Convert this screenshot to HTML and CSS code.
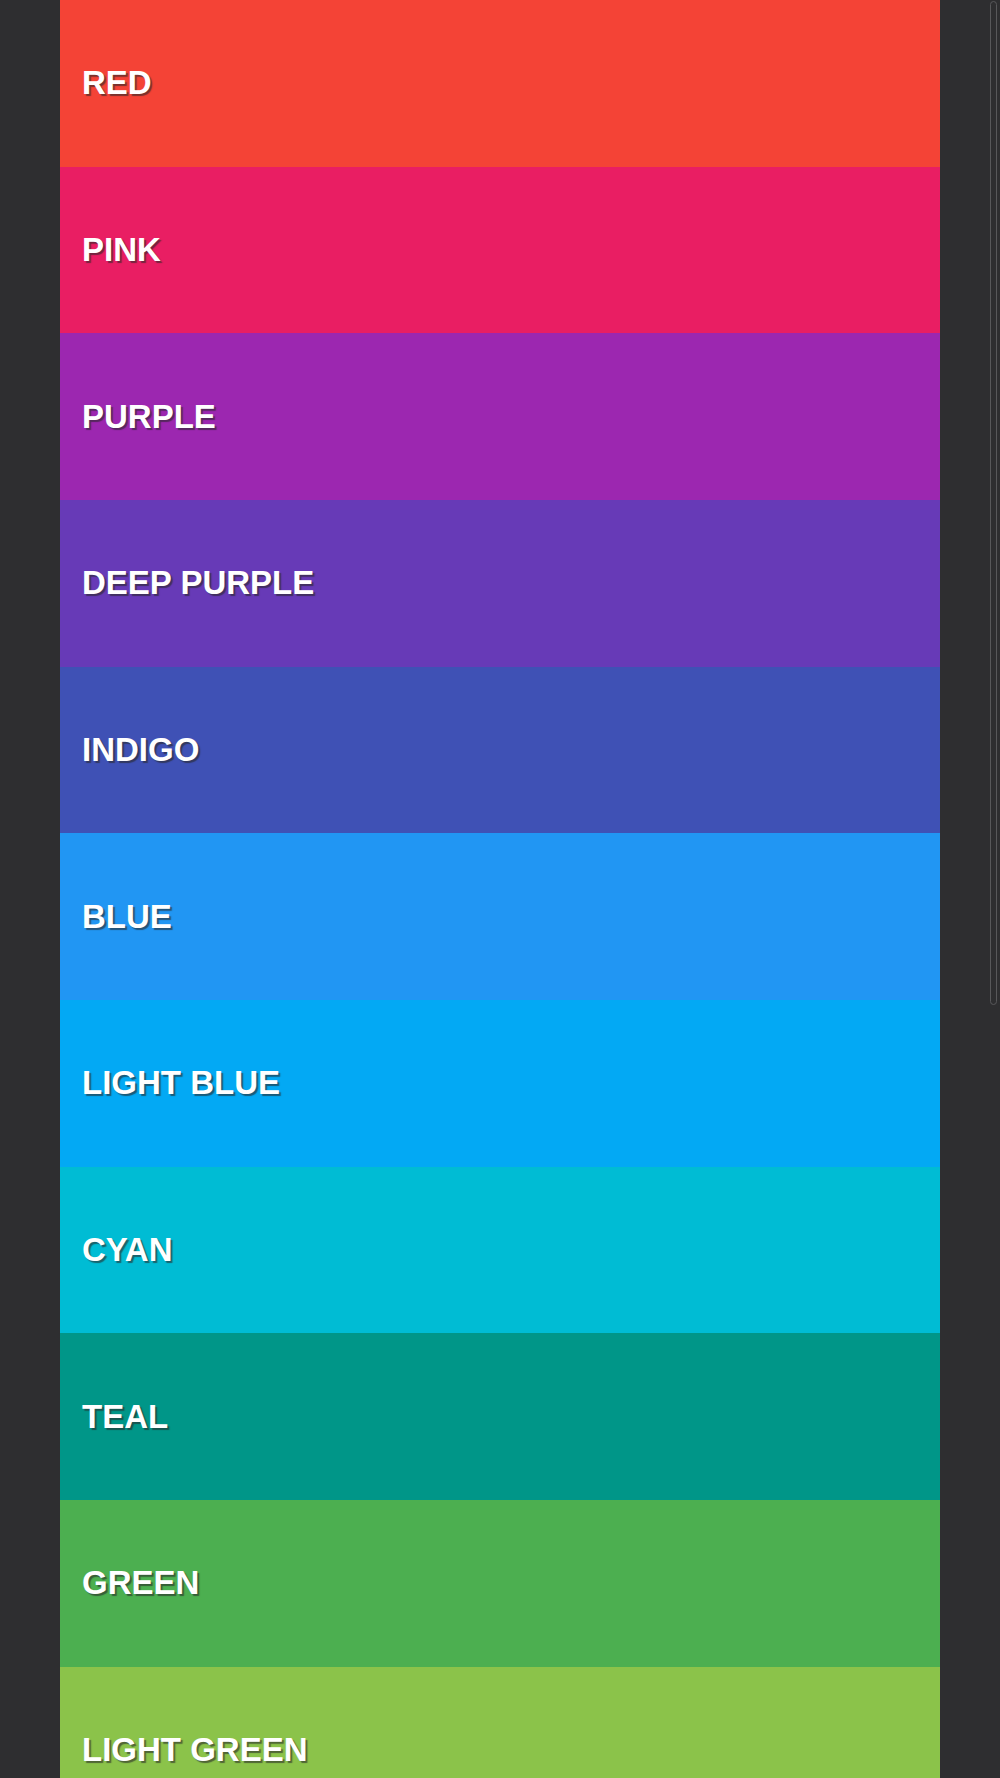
FILE: index.html
```html
<!DOCTYPE html>
<html lang="en">
<head>
<meta charset="utf-8">
<title>Colors</title>
<link rel="stylesheet" href="styles.css">
</head>
<body>
<ul class="colors">
  <li class="color red">Red</li>
  <li class="color pink">Pink</li>
  <li class="color purple">Purple</li>
  <li class="color deep-purple">Deep Purple</li>
  <li class="color indigo">Indigo</li>
  <li class="color blue">Blue</li>
  <li class="color light-blue">Light Blue</li>
  <li class="color cyan">Cyan</li>
  <li class="color teal">Teal</li>
  <li class="color green">Green</li>
  <li class="color light-green">Light Green</li>
  <li class="color lime">Lime</li>
  <li class="color yellow">Yellow</li>
  <li class="color amber">Amber</li>
  <li class="color orange">Orange</li>
  <li class="color deep-orange">Deep Orange</li>
  <li class="color brown">Brown</li>
  <li class="color grey">Grey</li>
  <li class="color blue-grey">Blue Grey</li>
</ul>
<div class="scroll-thumb"></div>
</body>
</html>
```

FILE: styles.css
```css
html {
  background: #2e2e30;
  scrollbar-width: none;
}
html::-webkit-scrollbar {
  display: none;
}
body {
  margin: 0;
  font-family: "Liberation Sans", Arial, sans-serif;
}
.colors {
  list-style: none;
  margin: 0 0 0 60px;
  padding: 0;
  width: 880px;
}
.color {
  height: 166.67px;
  box-sizing: border-box;
  padding: 0 22px;
  display: flex;
  align-items: center;
  color: #fff;
  font-size: 33px;
  font-weight: bold;
  text-transform: uppercase;
  text-shadow: 2px 2px 1px rgba(40, 40, 40, 0.6);
}
.red { background: #f44336; }
.pink { background: #e91e63; }
.purple { background: #9c27b0; }
.deep-purple { background: #673ab7; }
.indigo { background: #3f51b5; }
.blue { background: #2196f3; }
.light-blue { background: #03a9f4; }
.cyan { background: #00bcd4; }
.teal { background: #009688; }
.green { background: #4caf50; }
.light-green { background: #8bc34a; }
.lime { background: #cddc39; }
.yellow { background: #ffeb3b; }
.amber { background: #ffc107; }
.orange { background: #ff9800; }
.deep-orange { background: #ff5722; }
.brown { background: #795548; }
.grey { background: #9e9e9e; }
.blue-grey { background: #607d8b; }

.scroll-thumb {
  position: fixed;
  top: 1px;
  right: 3px;
  width: 5px;
  height: 1002px;
  border: 1px solid #58585a;
  border-radius: 4px;
  background: #2e2e30;
}
```
